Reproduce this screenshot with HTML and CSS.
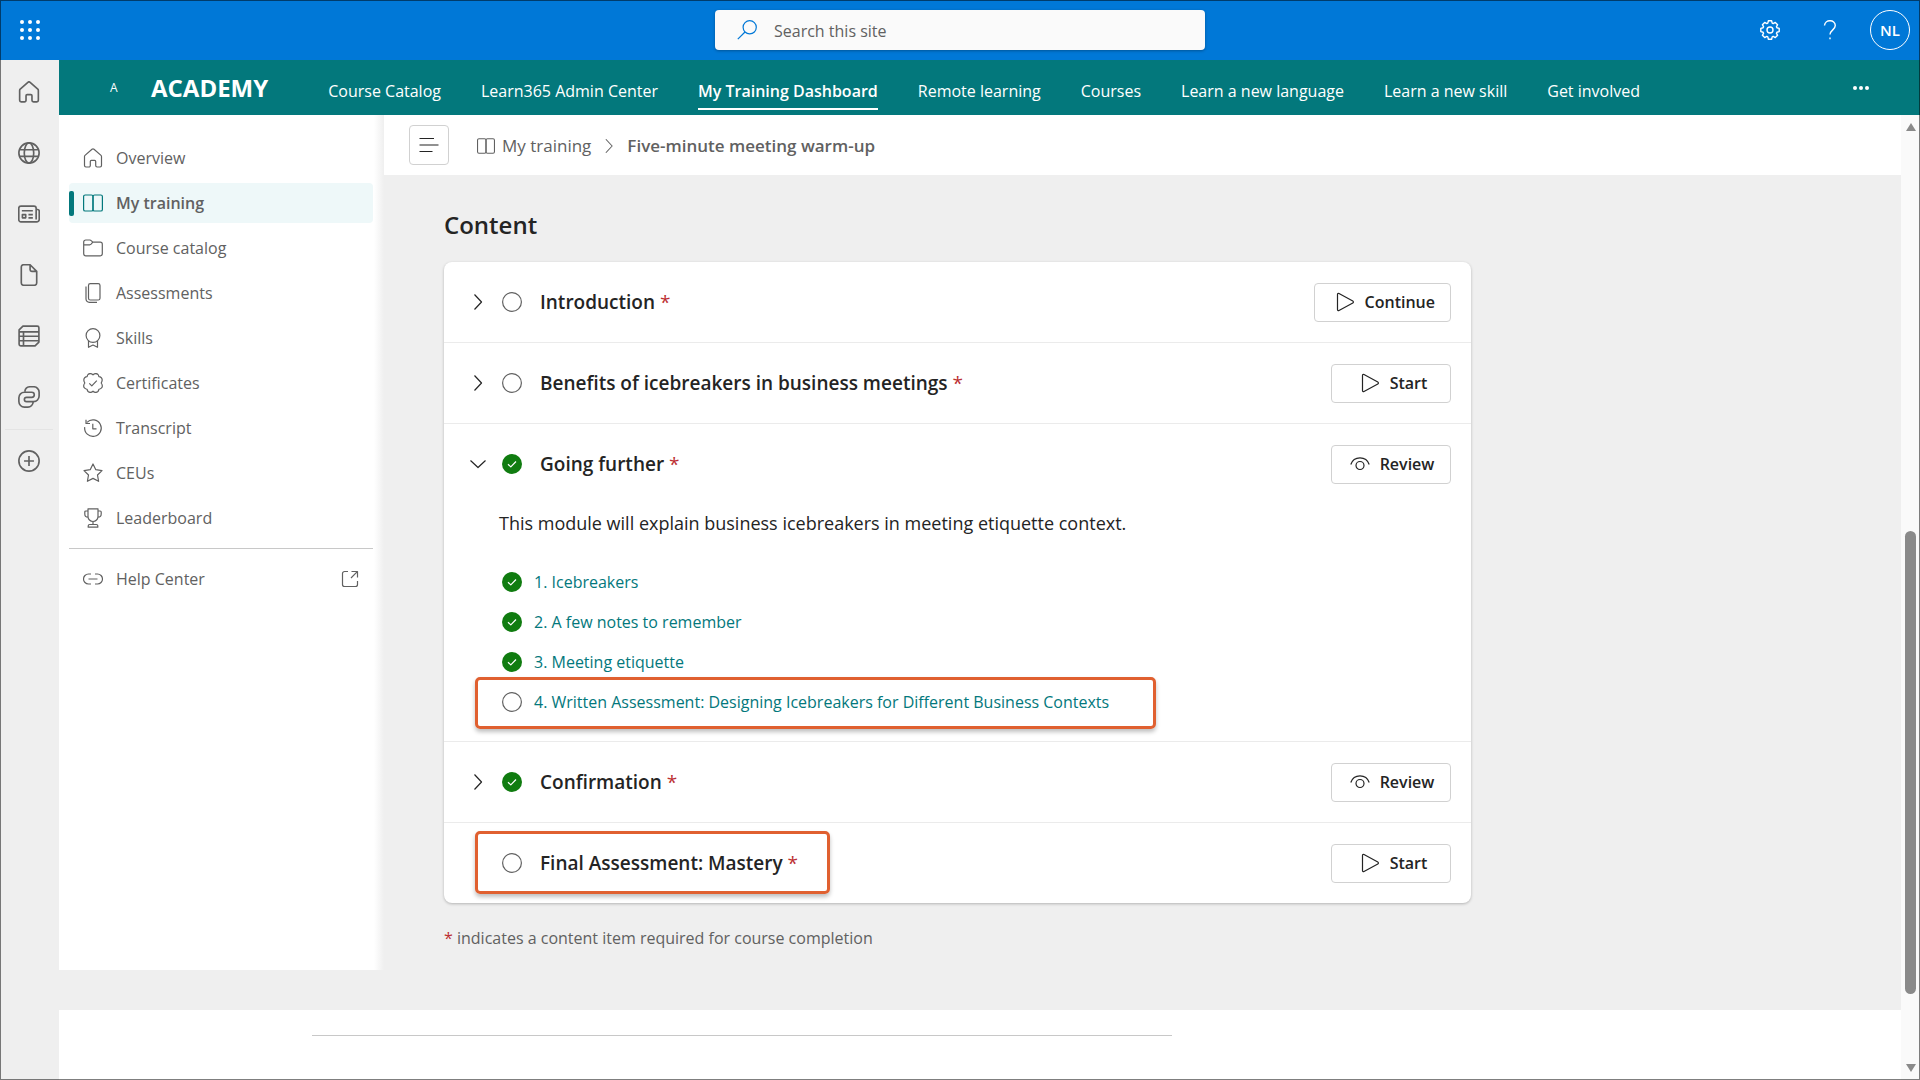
FILE: index.html
```html
<!DOCTYPE html>
<html lang="en">
<head>
<meta charset="UTF-8" />
<meta name="viewport" content="width=device-width, initial-scale=1" />
<title>Academy - My Training Dashboard</title>
<link rel="stylesheet" href="styles.css">
</head>
<body>
<!-- icon set -->
<svg class="sprite" aria-hidden="true">
  <symbol id="i-home" viewBox="0 0 20 20"><path d="M9 1.2a1.5 1.5 0 0 1 2 0l7 6.2c.4.4.5.7.5 1.2v9a1.4 1.4 0 0 1-1.4 1.4h-3a1.4 1.4 0 0 1-1.4-1.4v-4.2a1 1 0 0 0-1-1H8.300a1 1 0 0 0-1 1v4.200A1.400 1.400 0 0 1 5.900 19h-3a1.400 1.400 0 0 1-1.400-1.400v-9c0-.5.1-.8.5-1.200z"/></symbol>
  <symbol id="i-globe" viewBox="0 0 20 20"><circle cx="10" cy="10" r="9.200"/><ellipse cx="10" cy="10" rx="4.300" ry="9.200"/><path d="M1.200 7h17.600M1.200 13h17.600"/></symbol>
  <symbol id="i-news" viewBox="0 0 20 20"><path d="M16.500 15V4.800A2 2 0 0 0 14.500 2.800H2.700a2 2 0 0 0-2 2v10.400a2 2 0 0 0 2 2h14.200a2.400 2.400 0 0 0 2.400-2.500V7.400a1.500 1.500 0 0 0-1.500-1.500h-1.300M3.500 7h10M9.500 10.500h4M9.500 13.500h4M4 10.500h3v3H4z"/></symbol>
  <symbol id="i-doc" viewBox="0 0 20 20"><path d="M5 .7h6l6 6v10.600a2 2 0 0 1-2 2H5a2 2 0 0 1-2-2V2.700a2 2 0 0 1 2-2zM11 .9v4.300a1.500 1.500 0 0 0 1.500 1.500h4.300"/></symbol>
  <symbol id="i-list" viewBox="0 0 20 20"><path d="M4.500 1h13A1.500 1.500 0 0 1 19 2.500v13L15.500 19h-13A1.500 1.500 0 0 1 1 17.500v-13zM1 6.200h18M1 10.200h18M1 14.300h18M5 6.200V19"/></symbol>
  <symbol id="i-loop" viewBox="0 0 20 20"><path d="M7.500 14.200h6.700a5 5 0 0 0 5-5V5.700a5 5 0 0 0-5-5H11a5 5 0 0 0-4.800 4.100M12.500 5.700H5.800a5 5 0 0 0-5 5v3.500a5 5 0 0 0 5 5H9a5 5 0 0 0 4.800-4.500M12.500 5.700a2.300 2.300 0 0 1 0 4.600H7.800a2 2 0 0 0 0 4"/></symbol>
  <symbol id="i-plus" viewBox="0 0 20 20"><circle cx="10" cy="10" r="9.200"/><path d="M10 5.500v9M5.500 10h9"/></symbol>
  <symbol id="i-book" viewBox="0 0 20 20"><rect x=".6" y="2" width="9.400" height="16" rx="1.600"/><rect x="10" y="2" width="9.400" height="16" rx="1.600"/></symbol>
  <symbol id="i-folder" viewBox="0 0 20 20"><path d="M.7 6.500V4a2 2 0 0 1 2-2h4.200c.5 0 1 .2 1.300.6L9.800 4.200h7.500a2 2 0 0 1 2 2v9.600a2 2 0 0 1-2 2H2.700a2 2 0 0 1-2-2zM.7 6.800h6c.5 0 1-.2 1.400-.6l1.700-2"/></symbol>
  <symbol id="i-copy" viewBox="0 0 20 20"><rect x="5.500" y=".7" width="11.500" height="16.300" rx="1.800"/><path d="M3 3.500v12.500a3.300 3.300 0 0 0 3.300 3.300H14"/></symbol>
  <symbol id="i-ribbon" viewBox="0 0 20 20"><circle cx="10" cy="7.500" r="6.900"/><path d="M5.500 13v6.300l4.500-2.300 4.500 2.300V13"/></symbol>
  <symbol id="i-badge" viewBox="0 0 20 20"><path d="M10 1.800C11.500.4 13.800.5 15 1.500c.6.8.7 1.300.9 2.200 1 .1 1.600.3 2.400 1 1 1.200 1 3.500-.1 5.300 1.300 1.800 1.300 4 .1 5.200-.8.800-1.400 1-2.400 1.100-.2.900-.4 1.500-1 2.200-1.200 1-3.400 1-4.900-.3-1.500 1.300-3.700 1.300-4.900.3-.6-.7-.8-1.300-1-2.200-1-.1-1.600-.3-2.400-1.100C.5 14 .5 11.800 1.800 10 .7 8.200.7 5.900 1.700 4.700c.8-.7 1.400-.9 2.400-1 .2-.9.300-1.400.9-2.200 1.200-1 3.500-1.100 5 .3zM6.300 10.400l2.500 2.500 5-5.200"/></symbol>
  <symbol id="i-history" viewBox="0 0 20 20"><path d="M4 4.300a8.300 8.300 0 1 1-2.300 4.800M3 1.700v3.800h4M9.800 5.800v5h3.700"/></symbol>
  <symbol id="i-star" viewBox="0 0 20 20"><path d="M10 1l2.800 5.700 6.200.9-4.500 4.400 1.100 6.300L10 15.400l-5.600 2.900L5.500 12 1 7.600l6.200-.9z"/></symbol>
  <symbol id="i-trophy" viewBox="0 0 20 20"><path d="M5 .8h10v7.700a5 5 0 0 1-10 0zM5 3H2.800a1 1 0 0 0-1 1v2A3.200 3.200 0 0 0 5 9.200M15 3h2.200a1 1 0 0 1 1 1v2A3.200 3.200 0 0 1 15 9.200M10 13.500v3M5.200 19.200v-1.200a1.500 1.500 0 0 1 1.500-1.500h6.600a1.500 1.500 0 0 1 1.500 1.500v1.200z"/></symbol>
  <symbol id="i-link" viewBox="0 0 20 20"><path d="M8 5H5.500a5 5 0 0 0 0 10H8M12 5h2.500a5 5 0 0 1 0 10H12M5.500 10h9"/></symbol>
  <symbol id="i-open" viewBox="0 0 20 20"><path d="M8 2.500H4.500a2 2 0 0 0-2 2v11a2 2 0 0 0 2 2h11a2 2 0 0 0 2-2V12M11.500 2.500h6v6M17.300 2.700L11 9"/></symbol>
  <symbol id="i-search" viewBox="0 0 20 20"><circle cx="12.700" cy="7.300" r="6.600"/><path d="M8 12L.8 19.200"/></symbol>
  <symbol id="i-gear" viewBox="0 0 20 20"><path d="M8.400.8h3.200l.6 2.300 1 .5 2.100-1.200 2.300 2.300-1.200 2.100.5 1 2.300.6v3.200l-2.300.6-.5 1 1.200 2.100-2.300 2.300-2.100-1.200-1 .5-.6 2.300H8.400l-.6-2.300-1-.5-2.100 1.200-2.300-2.300 1.200-2.100-.5-1-2.300-.6V8.400l2.300-.6.500-1-1.200-2.100 2.300-2.300 2.100 1.200 1-.5z"/><circle cx="10" cy="10" r="3"/></symbol>
  <symbol id="i-help" viewBox="0 0 20 20"><path d="M4.500 5.500A5.300 5.300 0 0 1 10 .8a5 5 0 0 1 5.300 4.800c0 4-5.300 4.600-5.300 9M10 17.600v1.600"/></symbol>
  <symbol id="i-lines" viewBox="0 0 20 20"><path d="M.5 3.500H15M.5 10h19M.5 16.500h13"/></symbol>
  <symbol id="i-right" viewBox="0 0 20 20"><path d="M6.500 2.500l7 7.500-7 7.500"/></symbol>
  <symbol id="i-down" viewBox="0 0 20 20"><path d="M2.500 6.500l7.500 7 7.500-7"/></symbol>
  <symbol id="i-play" viewBox="0 0 20 20"><path d="M2.500 2.500v15c0 1 .7 1.400 1.500 1L17.800 11c.8-.4.8-1.500 0-2L4 1.500c-.8-.4-1.500 0-1.500 1z"/></symbol>
  <symbol id="i-eye" viewBox="0 0 20 20"><path d="M.8 10.500C2.300 6 5.700 3.800 10 3.800s7.700 2.200 9.200 6.700"/><circle cx="10" cy="11.500" r="4"/></symbol>
  <symbol id="i-todo" viewBox="0 0 20 20"><circle cx="10" cy="10" r="9.400"/></symbol>
  <symbol id="i-done" viewBox="0 0 20 20"><circle cx="10" cy="10" r="10" fill="#107c10" stroke="none"/><path d="M6 10.200l2.800 2.700 5.200-5.400" stroke="#fff"/></symbol>
</svg>

<header class="suite-bar">
  <button class="waffle" aria-label="App launcher">
    <i></i><i></i><i></i><i></i><i></i><i></i><i></i><i></i><i></i>
  </button>
  <label class="search">
    <svg class="icon"><use href="#i-search"/></svg>
    <input type="search" placeholder="Search this site" aria-label="Search this site" />
  </label>
  <div class="suite-actions">
    <button aria-label="Settings"><svg class="icon"><use href="#i-gear"/></svg></button>
    <button aria-label="Help"><svg class="icon"><use href="#i-help"/></svg></button>
    <button class="avatar">NL</button>
  </div>
</header>

<div class="shell">
  <nav class="rail" aria-label="SharePoint">
    <a href="#" aria-label="Home"><svg class="icon"><use href="#i-home"/></svg></a>
    <a href="#" aria-label="Sites"><svg class="icon"><use href="#i-globe"/></svg></a>
    <a href="#" aria-label="News"><svg class="icon"><use href="#i-news"/></svg></a>
    <a href="#" aria-label="Files"><svg class="icon"><use href="#i-doc"/></svg></a>
    <a href="#" aria-label="Lists"><svg class="icon"><use href="#i-list"/></svg></a>
    <a href="#" aria-label="Loop"><svg class="icon"><use href="#i-loop"/></svg></a>
    <hr />
    <a href="#" aria-label="Create"><svg class="icon"><use href="#i-plus"/></svg></a>
  </nav>

  <div class="site">
    <div class="site-header">
      <span class="site-logo">A</span>
      <a class="site-title" href="#">ACADEMY</a>
      <nav class="site-nav">
        <a href="#">Course Catalog</a>
        <a href="#">Learn365 Admin Center</a>
        <a href="#" class="active">My Training Dashboard</a>
        <a href="#">Remote learning</a>
        <a href="#">Courses</a>
        <a href="#">Learn a new language</a>
        <a href="#">Learn a new skill</a>
        <a href="#">Get involved</a>
      </nav>
      <button class="more" aria-label="More"><i></i><i></i><i></i></button>
    </div>

    <div class="viewport">
      <div class="scroll-content">
        <div class="dashboard">
          <nav class="sidebar" aria-label="Training">
            <a href="#"><svg class="icon"><use href="#i-home"/></svg>Overview</a>
            <a href="#" class="active"><svg class="icon"><use href="#i-book"/></svg>My training</a>
            <a href="#"><svg class="icon"><use href="#i-folder"/></svg>Course catalog</a>
            <a href="#"><svg class="icon"><use href="#i-copy"/></svg>Assessments</a>
            <a href="#"><svg class="icon"><use href="#i-ribbon"/></svg>Skills</a>
            <a href="#"><svg class="icon"><use href="#i-badge"/></svg>Certificates</a>
            <a href="#"><svg class="icon"><use href="#i-history"/></svg>Transcript</a>
            <a href="#"><svg class="icon"><use href="#i-star"/></svg>CEUs</a>
            <a href="#"><svg class="icon"><use href="#i-trophy"/></svg>Leaderboard</a>
            <hr />
            <a href="#"><svg class="icon"><use href="#i-link"/></svg>Help Center<svg class="icon open"><use href="#i-open"/></svg></a>
          </nav>

          <main class="page">
            <div class="crumb-bar">
              <button class="toggle" aria-label="Toggle menu"><svg class="icon"><use href="#i-lines"/></svg></button>
              <nav class="crumbs" aria-label="Breadcrumb">
                <a href="#"><svg class="icon"><use href="#i-book"/></svg>My training</a>
                <svg class="icon sep"><use href="#i-right"/></svg>
                <strong>Five-minute meeting warm-up</strong>
              </nav>
            </div>

            <section class="content">
              <h1>Content</h1>
              <div class="card">
                <div class="module">
                  <div class="module-head">
                    <button class="expand" aria-label="Expand"><svg class="icon"><use href="#i-right"/></svg></button>
                    <div class="name">
                      <svg class="icon status"><use href="#i-todo"/></svg>
                      <h2>Introduction <span class="req">*</span></h2>
                    </div>
                    <button class="action"><svg class="icon"><use href="#i-play"/></svg>Continue</button>
                  </div>
                </div>
                <div class="module">
                  <div class="module-head">
                    <button class="expand" aria-label="Expand"><svg class="icon"><use href="#i-right"/></svg></button>
                    <div class="name">
                      <svg class="icon status"><use href="#i-todo"/></svg>
                      <h2>Benefits of icebreakers in business meetings <span class="req">*</span></h2>
                    </div>
                    <button class="action"><svg class="icon"><use href="#i-play"/></svg>Start</button>
                  </div>
                </div>
                <div class="module">
                  <div class="module-head">
                    <button class="expand" aria-label="Collapse"><svg class="icon"><use href="#i-down"/></svg></button>
                    <div class="name">
                      <svg class="icon status"><use href="#i-done"/></svg>
                      <h2>Going further <span class="req">*</span></h2>
                    </div>
                    <button class="action review"><svg class="icon"><use href="#i-eye"/></svg>Review</button>
                  </div>
                  <div class="module-body">
                    <p>This module will explain business icebreakers in meeting etiquette context.</p>
                    <ul>
                      <li><svg class="icon status"><use href="#i-done"/></svg><a href="#">1. Icebreakers</a></li>
                      <li><svg class="icon status"><use href="#i-done"/></svg><a href="#">2. A few notes to remember</a></li>
                      <li><svg class="icon status"><use href="#i-done"/></svg><a href="#">3. Meeting etiquette</a></li>
                      <li class="callout"><svg class="icon status"><use href="#i-todo"/></svg><a href="#">4. Written Assessment: Designing Icebreakers for Different Business Contexts</a></li>
                    </ul>
                  </div>
                </div>
                <div class="module">
                  <div class="module-head">
                    <button class="expand" aria-label="Expand"><svg class="icon"><use href="#i-right"/></svg></button>
                    <div class="name">
                      <svg class="icon status"><use href="#i-done"/></svg>
                      <h2>Confirmation <span class="req">*</span></h2>
                    </div>
                    <button class="action review"><svg class="icon"><use href="#i-eye"/></svg>Review</button>
                  </div>
                </div>
                <div class="module">
                  <div class="module-head">
                    <span class="expand"></span>
                    <div class="name callout tall">
                      <svg class="icon status"><use href="#i-todo"/></svg>
                      <h2>Final Assessment: Mastery <span class="req">*</span></h2>
                    </div>
                    <button class="action"><svg class="icon"><use href="#i-play"/></svg>Start</button>
                  </div>
                </div>
              </div>
              <p class="note"><span class="req">*</span> indicates a content item required for course completion</p>
            </section>
          </main>
        </div>
        <footer class="page-footer"><hr /></footer>
      </div>

      <div class="scrollbar" aria-hidden="true">
        <span class="arrow up"></span>
        <span class="before"></span>
        <span class="thumb"></span>
        <span class="after"></span>
        <span class="arrow down"></span>
      </div>
    </div>
  </div>
</div>
</body>
</html>
```
FILE: styles.css
```css
:root {
  --blue: #0078d7;
  --teal: #03787c;
  --grey-bg: #efefef;
  --text: #242424;
  --muted: #616161;
  --line: #d1d1d1;
  --callout: #e06030;
}
* {
  box-sizing: border-box;
}
body {
  margin: 0;
  height: 100vh;
  display: flex;
  flex-direction: column;
  overflow: hidden;
  font-family: "Open Sans", "Noto Sans", sans-serif;
  font-size: 16px;
  line-height: 24px;
  color: var(--text);
}
/* window frame */
body::after {
  content: "";
  position: fixed;
  inset: 0;
  border: 1px solid rgba(0, 0, 0, 0.5);
  pointer-events: none;
}
a {
  color: inherit;
  text-decoration: none;
}
button {
  font: inherit;
  color: inherit;
  background: none;
  border: none;
  padding: 0;
  cursor: pointer;
}
h1, h2, p, ul {
  margin: 0;
  padding: 0;
}
.sprite {
  display: none;
}
.icon {
  width: 20px;
  height: 20px;
  flex: none;
  fill: none;
  stroke: currentColor;
  stroke-width: 1.2;
  stroke-linejoin: round;
}

/* Suite bar */
.suite-bar {
  flex: none;
  height: 60px;
  display: grid;
  grid-template-columns: 1fr 490px 1fr;
  align-items: center;
  background: var(--blue);
  color: #fff;
}
.waffle {
  width: 20px;
  margin-left: 20px;
  display: grid;
  grid-template-columns: repeat(3, 4px);
  justify-content: space-between;
  row-gap: 4px;
}
.waffle i,
.more i {
  width: 4px;
  height: 4px;
  border-radius: 50%;
  background: #fff;
}
.search {
  height: 40px;
  display: flex;
  align-items: center;
  gap: 16px;
  padding: 0 22px;
  background: #fafafa;
  border-radius: 4px;
  box-shadow: 0 1px 3px rgba(0, 0, 0, 0.3);
  color: var(--blue);
}
.search input {
  flex: 1;
  padding: 2px 0 0 1px;
  border: none;
  outline: none;
  background: none;
  font: inherit;
}
.search input::placeholder {
  color: var(--muted);
}
.suite-actions {
  display: flex;
  justify-content: flex-end;
  align-items: center;
  gap: 40px;
  padding-right: 10px;
}
.suite-actions button {
  display: flex;
}
.suite-actions .icon {
  stroke-width: 1.4;
}
.suite-actions .avatar {
  width: 40px;
  height: 40px;
  margin-left: -10px;
  align-items: center;
  justify-content: center;
  border: 1px solid #fff;
  border-radius: 50%;
  font-size: 15px;
  font-weight: 600;
}

/* Left rail */
.shell {
  flex: 1;
  min-height: 0;
  display: flex;
}
.rail {
  flex: none;
  width: 59px;
  padding: 1px 1px 0 0;
  background: var(--grey-bg);
  color: var(--muted);
}
.rail a {
  height: 61px;
  display: flex;
  align-items: center;
  justify-content: center;
}
.rail .icon {
  width: 22px;
  height: 22px;
  stroke-width: 1.5;
}
.rail hr {
  margin: 2px 5px 0;
  border: none;
  border-top: 1px solid #e4e4e4;
}

/* Site header */
.site {
  flex: 1;
  min-width: 0;
  display: flex;
  flex-direction: column;
}
.site-header {
  flex: none;
  height: 55px;
  display: flex;
  align-items: center;
  background: var(--teal);
  color: #fff;
}
.site-logo {
  width: 92px;
  padding-left: 51px;
  font-size: 12px;
}
.site-title {
  font-size: 24px;
  font-weight: 700;
}
.site-nav {
  flex: 1;
  display: flex;
  gap: 40px;
  margin-left: 60px;
  padding-top: 14px;
  white-space: nowrap;
}
.site-nav a {
  padding-bottom: 5px;
  border-bottom: 2px solid transparent;
}
.site-nav .active {
  font-weight: 600;
  border-color: #fff;
}
.more {
  display: flex;
  gap: 2px;
  margin-right: 51px;
}

/* Page area */
.viewport {
  flex: 1;
  min-height: 0;
  display: flex;
}
.scroll-content {
  flex: 1;
  min-width: 0;
  overflow: hidden;
  display: flex;
  flex-direction: column;
}
.dashboard {
  flex: 1;
  display: flex;
  padding-bottom: 40px;
  background: var(--grey-bg);
}
.sidebar {
  flex: none;
  width: 325px;
  padding: 23px 11px 0 10px;
  background: linear-gradient(to left, var(--grey-bg), #fff 10px);
  color: var(--muted);
}
.sidebar a {
  height: 40px;
  margin-bottom: 5px;
  padding: 0 13px 0 14px;
  display: flex;
  align-items: center;
  gap: 13px;
  border-radius: 4px;
}
.sidebar .active {
  padding-left: 0;
  background: #eef8f9;
  font-weight: 600;
}
.sidebar .active::before {
  content: "";
  width: 5px;
  height: 25px;
  margin-right: -4px;
  border-radius: 2px;
  background: var(--teal);
}
.sidebar .active .icon {
  color: var(--teal);
}
.sidebar .open {
  margin-left: auto;
}
.sidebar hr {
  margin: 10px 0;
  border: none;
  border-top: 1px solid #c8c8c8;
}
.page {
  flex: 1;
  min-width: 0;
}
.crumb-bar {
  height: 60px;
  padding-left: 25px;
  display: flex;
  align-items: center;
  gap: 28px;
  background: #fff;
}
.toggle {
  width: 40px;
  height: 40px;
  display: flex;
  align-items: center;
  justify-content: center;
  border: 1px solid var(--line);
  border-radius: 4px;
}
.crumbs {
  display: flex;
  align-items: center;
  gap: 9px;
  padding-top: 2px;
  font-size: 17px;
  color: var(--muted);
}
.crumbs a {
  display: flex;
  align-items: center;
  gap: 7px;
}
.crumbs .icon {
  width: 18px;
  height: 18px;
}
.crumbs strong {
  font-weight: 600;
}

/* Content card */
.content {
  padding: 34px 60px 0;
}
.content h1 {
  font-size: 24px;
  line-height: 32px;
  font-weight: 600;
}
.card {
  max-width: 1027px;
  margin-top: 21px;
  background: #fff;
  border-radius: 8px;
  box-shadow: 0 1px 3px rgba(0, 0, 0, 0.25);
}
.module + .module {
  border-top: 1px solid #ebebeb;
}
.module-head {
  height: 80px;
  padding: 0 20px 0 24px;
  display: flex;
  align-items: center;
}
.expand {
  width: 20px;
  height: 20px;
  margin-right: 14px;
}
.name {
  display: flex;
  align-items: center;
  gap: 18px;
}
h2 {
  font-size: 19px;
  font-weight: 600;
}
.req {
  color: #bc2f32;
  font-weight: 400;
}
.action {
  height: 39px;
  min-width: 120px;
  margin-left: auto;
  padding: 0 15px 0 20px;
  display: flex;
  align-items: center;
  justify-content: center;
  gap: 10px;
  border: 1px solid var(--line);
  border-radius: 4px;
  font-weight: 600;
}
.review {
  padding-left: 17px;
}
.module-body {
  padding: 7px 55px 19px;
}
.module-body p {
  font-size: 18px;
}
.module-body ul {
  margin-top: 27px;
  list-style: none;
}
.module-body li {
  width: fit-content;
  height: 40px;
  padding-left: 3px;
  display: flex;
  align-items: center;
  gap: 12px;
  color: var(--teal);
}
.module-body .status,
.name .status {
  color: var(--muted);
}
.callout {
  position: relative;
}
.callout::after {
  content: "";
  position: absolute;
  inset: -5px -47px -7px -24px;
  border: 3px solid var(--callout);
  border-radius: 5px;
  box-shadow: 0 3px 4px rgba(0, 0, 0, 0.25);
  pointer-events: none;
}
.callout.tall::after {
  inset: -20px -32px -19px -27px;
}
.note {
  margin-top: 23px;
  color: var(--muted);
}
.page-footer {
  flex: none;
  height: 70px;
  padding: 25px 0 0 253px;
  background: #fff;
}
.page-footer hr {
  max-width: 860px;
  margin: 0;
  border: none;
  border-top: 1px solid #c8c8c8;
}

/* Scrollbar */
.scrollbar {
  flex: none;
  width: 19px;
  padding: 8px 0;
  display: flex;
  flex-direction: column;
  align-items: center;
  background: #fafafa;
}
.arrow {
  border: 5px solid transparent;
}
.arrow.up {
  border-top: none;
  border-bottom: 8px solid #8a8a8a;
}
.arrow.down {
  border-bottom: none;
  border-top: 8px solid #8a8a8a;
}
.before {
  flex: 400;
}
.thumb {
  flex: 462;
  width: 11px;
  border-radius: 6px;
  background: #8a8a8a;
}
.after {
  flex: 70;
}
```
